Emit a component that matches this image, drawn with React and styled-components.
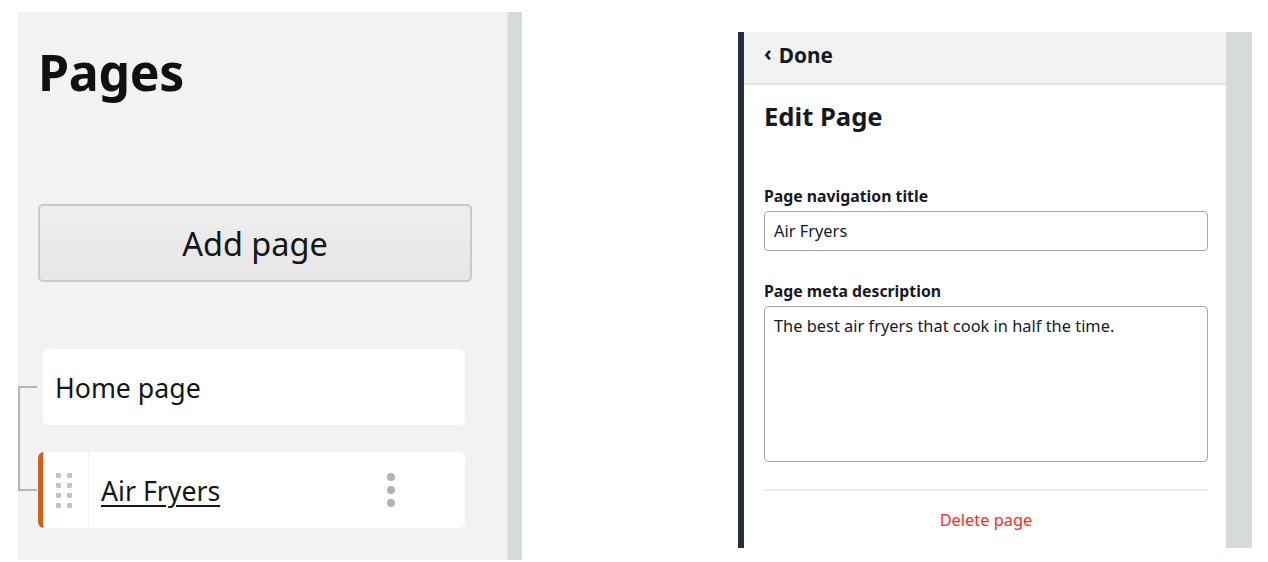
import React from "react";
import styled, { createGlobalStyle } from "styled-components";

const Global = createGlobalStyle`
  html, body { margin: 0; padding: 0; background: #ffffff; }
  body { font-family: "Noto Sans", "Open Sans", sans-serif; color: #16191f; }
  * { box-sizing: border-box; }
`;

const Stage = styled.div`
  width: 1268px;
  height: 562px;
  display: flex;
  align-items: flex-start;
  overflow: hidden;
`;

const LeftPanel = styled.section`
  margin: 12px 0 0 18px;
  height: 548px;
  display: flex;
`;

const LeftContent = styled.div`
  width: 489px;
  background: #f2f2f2;
  padding: 0 0 0 20px;
  display: flex;
  flex-direction: column;
`;

const Scrollbar = styled.div`
  width: ${(p) => p.$w}px;
  background: #d5dbdb;
  border-left: 1px solid ${(p) => p.$edge || "#d5dbdb"};
`;

const Title = styled.h1`
  margin: 0;
  padding-top: 30px;
  font-size: 50px;
  line-height: 60px;
  font-weight: 700;
  color: #111111;
  letter-spacing: -0.3px;
`;

const AddButton = styled.button`
  margin-top: 102px;
  width: 434px;
  height: 78px;
  border: 2px solid #c9c9c9;
  border-radius: 5px;
  background: linear-gradient(#eeeeee, #e6e6e6);
  font-family: inherit;
  font-size: 32.5px;
  color: #161616;
  cursor: pointer;
`;

const Tree = styled.ul`
  position: relative;
  list-style: none;
  margin: 67px 0 0 -20px;
  padding: 0;
  display: flex;
  flex-direction: column;
  gap: 27px;
  &::before {
    content: "";
    position: absolute;
    left: 0;
    top: 38px;
    bottom: 38px;
    width: 1.5px;
    background: #b5b5b5;
  }
`;

const TreeRow = styled.li`
  display: flex;
  align-items: center;
`;

const Connector = styled.span`
  width: ${(p) => p.$w}px;
  margin-right: ${(p) => p.$gap}px;
  height: 1.5px;
  background: #b5b5b5;
`;

const Card = styled.div`
  width: ${(p) => p.$w}px;
  height: 76px;
  background: #ffffff;
  border-radius: 6px;
  display: flex;
  align-items: center;
  overflow: hidden;
  ${(p) => (p.$active ? "border-left: 5px solid #d2601a;" : "")}
`;

const CardLabel = styled.span`
  font-size: 26.7px;
  color: #161616;
  padding-left: ${(p) => p.$pad}px;
  flex: 1;
  ${(p) => (p.$link ? "text-decoration: underline; text-underline-offset: 4px; text-decoration-thickness: 2px;" : "")}
`;

const Handle = styled.div`
  width: 46px;
  height: 100%;
  border-right: 1px solid #f0f0f0;
  display: flex;
  align-items: center;
  justify-content: center;
  padding-right: 2px;
`;

const HandleDots = styled.div`
  display: grid;
  grid-template-columns: repeat(2, 5px);
  grid-auto-rows: 5px;
  column-gap: 6px;
  row-gap: 5px;
  margin-left: -2px;
  span { background: #c4c4c4; border-radius: 1px; }
`;

const Kebab = styled.div`
  display: flex;
  flex-direction: column;
  gap: 5px;
  margin-right: 70px;
  span { width: 8px; height: 8px; border-radius: 50%; background: #b3b3b3; }
`;

const RightPanel = styled.section`
  margin: 32px 0 0 216px;
  height: 516px;
  display: flex;
`;

const Editor = styled.div`
  width: 488px;
  border-left: 6px solid #232f3e;
  background: #ffffff;
  display: flex;
  flex-direction: column;
`;

const Header = styled.header`
  height: 53px;
  background: #f2f2f2;
  border-bottom: 2px solid #e3e3e3;
  display: flex;
  align-items: center;
  padding-left: 20px;
  padding-bottom: 5px;
  font-size: 20.8px;
  font-weight: 700;
  color: #16191f;
  gap: 7px;
`;

const Chevron = styled.span`
  font-size: 21px;
  position: relative;
  top: -2px;
`;

const Body = styled.div`
  padding: 0 18px 0 20px;
  display: flex;
  flex-direction: column;
`;

const EditTitle = styled.h2`
  margin: 16px 0 0;
  font-size: 25.6px;
  line-height: 32px;
  font-weight: 700;
  color: #16191f;
`;

const Label = styled.label`
  display: block;
  font-size: 15.8px;
  font-weight: 700;
  line-height: 20px;
  margin-top: ${(p) => p.$top}px;
  color: #16191f;
`;

const Field = styled.div`
  margin-top: 5px;
  height: ${(p) => p.$h}px;
  border: 1.5px solid #a8a8a8;
  border-radius: 4px;
  padding: ${(p) => p.$padTop}px 9px 0;
  font-size: 16.4px;
  line-height: 20px;
  color: #16191f;
`;

const Divider = styled.hr`
  margin: 27px 0 0;
  border: 0;
  border-top: 2px solid #eceeee;
`;

const Delete = styled.button`
  margin-top: 16px;
  background: none;
  border: 0;
  font-family: inherit;
  font-size: 16.4px;
  color: #ff2a1f;
  cursor: pointer;
  align-self: center;
`;

export default function App() {
  return (
    <>
      <Global />
      <Stage>
        <LeftPanel>
          <LeftContent>
            <Title>Pages</Title>
            <AddButton>Add page</AddButton>
            <Tree>
              <TreeRow>
                <Connector $w={19} $gap={6} />
                <Card $w={422}>
                  <CardLabel $pad={12}>Home page</CardLabel>
                </Card>
              </TreeRow>
              <TreeRow>
                <Connector $w={19} $gap={1} />
                <Card $w={427} $active>
                  <Handle>
                    <HandleDots>
                      {Array.from({ length: 8 }).map((_, i) => (
                        <span key={i} />
                      ))}
                    </HandleDots>
                  </Handle>
                  <CardLabel $pad={12} $link>Air Fryers</CardLabel>
                  <Kebab>
                    <span />
                    <span />
                    <span />
                  </Kebab>
                </Card>
              </TreeRow>
            </Tree>
          </LeftContent>
          <Scrollbar $w={15} $edge="#e6e9e9" />
        </LeftPanel>
        <RightPanel>
          <Editor>
            <Header>
              <Chevron>‹</Chevron>
              <span>Done</span>
            </Header>
            <Body>
              <EditTitle>Edit Page</EditTitle>
              <Label $top={53}>Page navigation title</Label>
              <Field $h={40} $padTop={9}>Air Fryers</Field>
              <Label $top={30}>Page meta description</Label>
              <Field $h={156} $padTop={9}>The best air fryers that cook in half the time.</Field>
              <Divider />
              <Delete>Delete page</Delete>
            </Body>
          </Editor>
          <Scrollbar $w={26} />
        </RightPanel>
      </Stage>
    </>
  );
}
